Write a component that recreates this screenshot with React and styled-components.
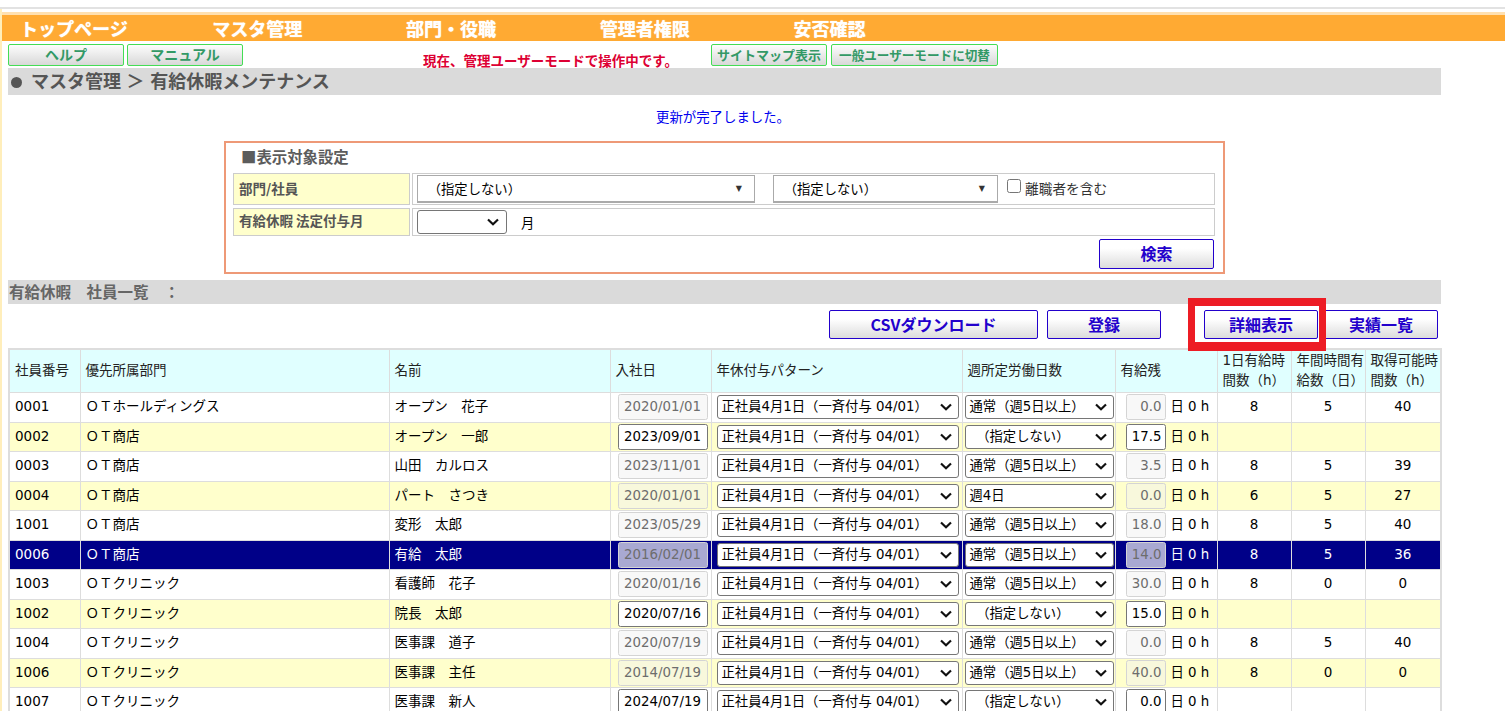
import React from "react";
import styled, { createGlobalStyle } from "styled-components";

const Global = createGlobalStyle`
  html, body { margin: 0; padding: 0; background: #fff; overflow: hidden; }
  body { font-family: "DejaVu Sans", "Noto Sans CJK JP", sans-serif; font-size: 13.33px; color: #000; }
  * { box-sizing: border-box; }
`;

const TopRule = styled.div`height: 2px; margin-top: 7px; background: #e2e2e2;`;
const Page = styled.div`border-left: 2px solid #ffeebb; padding-top: 3px;`;
const NavBar = styled.nav`
  display: flex; gap: 103.7px; height: 29px; padding-left: 18px;
  border-top: 3px solid #ffe0b0; background: #ffaa33;
`;
const NavItem = styled.a`
  font-size: 18px; line-height: 27px; font-weight: 700; color: #fff;
  text-shadow: 0 0 1px #fff;
  margin-right: ${p => (p.$first ? "-19px" : "0")};
  font-family: "Noto Sans CJK JP", sans-serif;
`;
const ToolRow = styled.div`
  display: flex; align-items: flex-start; height: 27px; padding: 3px 0 0 6px; overflow: hidden;
`;
const GreenButton = styled.button`
  width: ${p => p.$w}px; height: 22px; margin-left: ${p => p.$ml || 0}px; padding: 0 0 1px;
  border: 1px solid #44dd55; border-radius: 2px;
  background: linear-gradient(#fdfdfd, #d8d8d8);
  color: #339966; font: 700 ${p => p.$fs}px "Noto Sans CJK JP", sans-serif; line-height: 17px; white-space: nowrap;
`;
const ModeNotice = styled.span`
  margin: 6px 0 0 180px; width: 288px; color: #dd0033; font-size: 13.5px; font-weight: 700; line-height: 22px; white-space: nowrap;
`;
const TitleBar = styled.h1`
  margin: 0 0 0 6px; width: 1433px; height: 27px; padding-left: 3px;
  background: #dadada; color: #555; font: 700 18px/24px "Noto Sans CJK JP", sans-serif; white-space: pre; word-spacing: 1.5px;
`;
const Bullet = styled.span`
  display: inline-block; width: 11px; height: 11px; margin: 0 9px 0 0; border-radius: 50%; background: #555;
`;
const Done = styled.p`
  margin: 14px 0 0 6px; width: 1430px; height: 19px; text-align: center; color: #0000ee; font-size: 13.4px; line-height: 18px;
`;
const Panel = styled.section`
  width: 1001px; height: 133px; margin: 13px 0 0 222px; padding: 5px 8px 0 7px;
  border: 2px solid #ee9977; position: relative;
`;
const PanelTitle = styled.h2`
  margin: 0 0 5px 8px; height: 20px; color: #5c5c5c; font: 700 15.4px/16px "Noto Sans CJK JP", sans-serif;
`;
const FilterRow = styled.div`display: flex; gap: 2px; height: ${p => p.$h}px; margin-bottom: 3px;`;
const FilterLabel = styled.div`
  width: 177px; padding-left: 5px; border: 1px solid #ccc; background: #ffffcc; color: #555;
  font: 700 13.5px/${p => p.$lh}px "Noto Sans CJK JP", sans-serif; white-space: nowrap;
`;
const FilterValue = styled.div`
  flex: 1; display: flex; align-items: center; padding-left: 4px; border: 1px solid #ccc;
`;
const Combo = styled.div`
  display: flex; align-items: center; justify-content: space-between;
  width: ${p => p.$w}px; height: 28px; margin-right: ${p => p.$mr || 0}px; padding: 0 12px 0 ${p => p.$pl}px;
  border: 1px solid #aaa; border-bottom-width: 2px; background: #fff; font-size: 13.33px;
`;
const ComboArrow = styled.span`font-size: 8px; color: #333;`;
const Check = styled.span`
  width: 14px; height: 14px; margin: -6px 4px 0 0; border: 1px solid #767676; border-radius: 2.5px; background: #fff;
`;
const CheckLabel = styled.span`margin-top: -2px; font-size: 13.7px; color: #333;`;
const MonthUnit = styled.span`margin-left: 14px; font-size: 13.33px;`;
const Select = styled.div`
  display: flex; align-items: center; justify-content: space-between;
  width: ${p => p.$w}px; height: ${p => p.$h || 24}px; margin: ${p => p.$m || "0"};
  padding: 0 ${p => p.$pr || 7}px 0 ${p => p.$pl || 4}px;
  border: 1px solid #767676; border-radius: 3px; background: #fff; color: #000;
  font-size: 13.33px; white-space: pre;
`;
const Chevron = () => (
  <svg width="12" height="8" viewBox="0 0 12 8" fill="none" stroke="#111" strokeWidth="2.2">
    <path d="M1 1.5 L6 6.2 L11 1.5" />
  </svg>
);
const BlueButton = styled.button`
  width: ${p => p.$w}px; height: ${p => p.$h}px; margin-left: ${p => p.$ml || 0}px; padding: 0 0 2px;
  border: 1px solid #2200cc; border-radius: 2px; background: linear-gradient(#fff, #fff 30%, #dcdcdc);
  color: #2200cc; font: 700 16px/20px "Noto Sans CJK JP", sans-serif; flex: none;
`;
const SearchRow = styled.div`display: flex; justify-content: flex-end; padding-right: 1px;`;
const SectionBar = styled.div`
  width: 1433px; height: 24px; margin: 6px 0 0 6px; padding-left: 1px; background: #dadada; color: #666;
  font: 700 15.5px/22px "Noto Sans CJK JP", sans-serif; white-space: pre;
`;
const ActionRow = styled.div`
  display: flex; height: 44px; padding: 6px 0 0 827px;
`;
const Marker = styled.div`
  position: absolute; left: 1188px; top: 298px; width: 138px; height: 53px;
  border: 7px solid #ed1c24; border-width: 8px 7px 9px; z-index: 2;
`;
const Table = styled.table`
  width: 1432px; margin-left: 6px; table-layout: fixed; border-collapse: collapse; border: 2px solid #ddd;
`;
const Head = styled.th`
  height: 43px; padding: 0 0 2px 5px; border: 1px solid #ddd; background: #e0ffff; color: #222;
  text-align: left; font-weight: 400; font-size: 13.5px; line-height: 20px; overflow: hidden;
`;
const Row = styled.tr`
  height: ${p => (p.$odd ? 30 : 29)}px;
  background: ${p => (p.$sel ? "#000088" : p.$odd ? "#fff" : "#ffffcc")};
  color: ${p => (p.$sel ? "#fff" : "#000")};
`;
const Cell = styled.td`
  padding: 0 ${p => (p.$center ? 0 : 5)}px;
  border: 1px solid #ddd; font-size: 13.5px; line-height: 26px; vertical-align: top;
  text-align: ${p => (p.$center ? "center" : "left")}; white-space: nowrap; overflow: hidden;
`;
const FieldCell = styled(Cell)`padding: 0;`;
const FieldWrap = styled.div`display: flex; align-items: center; height: 27px; padding: 1px 0 0 ${p => p.$pl}px;`;
const Field = styled.div`
  width: ${p => p.$w}px; height: 26px; padding-right: 3px; border-radius: 2.5px; flex: none;
  font-size: 13.33px; line-height: 24px; text-align: right;
  border: 1px solid ${p => (p.$on ? "#767676" : "#d4d4d4")};
  color: ${p => (p.$on ? "#000" : "#6d6d6d")};
  background: ${p => (p.$on ? "#fff" : p.$sel ? "#a9a9d2" : "rgba(239,239,239,0.45)")};
`;
const DateField = styled(Field)`text-align: center; padding-right: 0;`;
const Unit = styled.span`margin: -1px 0 0 5px; font-size: 13.33px;`;

const NAV = ["トップページ", "マスタ管理", "部門・役職", "管理者権限", "安否確認"];
const A = "通常（週5日以上）", N = "　（指定しない）", F = "週4日";
const ROWS = [
  ["0001", "ＯＴホールディングス", "オープン　花子", "2020/01/01", A, "0.0", 8, 5, 40],
  ["0002", "ＯＴ商店", "オープン　一郎", "2023/09/01", N, "17.5", "", "", ""],
  ["0003", "ＯＴ商店", "山田　カルロス", "2023/11/01", A, "3.5", 8, 5, 39],
  ["0004", "ＯＴ商店", "パート　さつき", "2020/01/01", F, "0.0", 6, 5, 27],
  ["1001", "ＯＴ商店", "変形　太郎", "2023/05/29", A, "18.0", 8, 5, 40],
  ["0006", "ＯＴ商店", "有給　太郎", "2016/02/01", A, "14.0", 8, 5, 36],
  ["1003", "ＯＴクリニック", "看護師　花子", "2020/01/16", A, "30.0", 8, 0, 0],
  ["1002", "ＯＴクリニック", "院長　太郎", "2020/07/16", N, "15.0", "", "", ""],
  ["1004", "ＯＴクリニック", "医事課　道子", "2020/07/19", A, "0.0", 8, 5, 40],
  ["1006", "ＯＴクリニック", "医事課　主任", "2014/07/19", A, "40.0", 8, 0, 0],
  ["1007", "ＯＴクリニック", "医事課　新人", "2024/07/19", N, "0.0", "", "", ""],
];
const WIDTHS = [71, 309, 221, 101, 251, 153, 102, 74, 74, 76];
const HEADS = ["社員番号", "優先所属部門", "名前", "入社日", "年休付与パターン", "週所定労働日数", "有給残", "1日有給時間数（h）", "年間時間有給数（日）", "取得可能時間数（h）"];

export default function App() {
  return (
    <>
      <Global />
      <TopRule />
      <Page>
        <NavBar>
          {NAV.map((n, i) => <NavItem key={n} $first={i === 0}>{n}</NavItem>)}
        </NavBar>
        <ToolRow>
          <GreenButton $w={116} $fs={14}>ヘルプ</GreenButton>
          <GreenButton $w={116} $fs={14} $ml={3}>マニュアル</GreenButton>
          <ModeNotice>現在、管理ユーザーモードで操作中です。</ModeNotice>
          <GreenButton $w={116} $fs={13}>サイトマップ表示</GreenButton>
          <GreenButton $w={167} $fs={12.6} $ml={4}>一般ユーザーモードに切替</GreenButton>
        </ToolRow>
        <TitleBar><Bullet />マスタ管理 ＞ 有給休暇メンテナンス</TitleBar>
        <Done>更新が完了しました。</Done>
        <Panel>
          <PanelTitle>■表示対象設定</PanelTitle>
          <FilterRow $h={32}>
            <FilterLabel $lh={29}>部門/社員</FilterLabel>
            <FilterValue>
              <Combo $w={338} $mr={18} $pl={3}><span>　（指定しない）</span><ComboArrow>▼</ComboArrow></Combo>
              <Combo $w={225} $mr={9} $pl={3}><span>　（指定しない）</span><ComboArrow>▼</ComboArrow></Combo>
              <Check />
              <CheckLabel>離職者を含む</CheckLabel>
            </FilterValue>
          </FilterRow>
          <FilterRow $h={28}>
            <FilterLabel $lh={23}>有給休暇 法定付与月</FilterLabel>
            <FilterValue>
              <Select $w={90} $h={24}><span /><Chevron /></Select>
              <MonthUnit>月</MonthUnit>
            </FilterValue>
          </FilterRow>
          <SearchRow><BlueButton $w={115} $h={30}>検索</BlueButton></SearchRow>
        </Panel>
        <SectionBar>有給休暇　社員一覧　：</SectionBar>
        <ActionRow>
          <BlueButton $w={209} $h={29}>CSVダウンロード</BlueButton>
          <BlueButton $w={114} $h={29} $ml={9}>登録</BlueButton>
          <BlueButton $w={114} $h={29} $ml={43}>詳細表示</BlueButton>
          <BlueButton $w={114} $h={29} $ml={6}>実績一覧</BlueButton>
        </ActionRow>
        <Table>
          <colgroup>{WIDTHS.map((w, i) => <col key={i} width={w} />)}</colgroup>
          <thead><tr>{HEADS.map(h => <Head key={h}>{h}</Head>)}</tr></thead>
          <tbody>
            {ROWS.map((r, i) => {
              const on = r[6] === "";
              const sel = r[0] === "0006";
              return (
                <Row key={r[0]} $odd={i % 2 === 0} $sel={sel}>
                  <Cell>{r[0]}</Cell>
                  <Cell>{r[1]}</Cell>
                  <Cell>{r[2]}</Cell>
                  <FieldCell><FieldWrap $pl={7}><DateField $w={90} $on={on} $sel={sel}>{r[3]}</DateField></FieldWrap></FieldCell>
                  <FieldCell><FieldWrap $pl={5}><Select $w={242} $pl={4} $pr={6}>正社員4月1日（一斉付与 04/01）<Chevron /></Select></FieldWrap></FieldCell>
                  <FieldCell><FieldWrap $pl={2}><Select $w={149} $pr={6}>{r[4]}<Chevron /></Select></FieldWrap></FieldCell>
                  <FieldCell><FieldWrap $pl={10}><Field $w={40} $on={on} $sel={sel}>{r[5]}</Field><Unit>日 0 h</Unit></FieldWrap></FieldCell>
                  <Cell $center>{r[6]}</Cell>
                  <Cell $center>{r[7]}</Cell>
                  <Cell $center>{r[8]}</Cell>
                </Row>
              );
            })}
          </tbody>
        </Table>
      </Page>
      <Marker />
    </>
  );
}
